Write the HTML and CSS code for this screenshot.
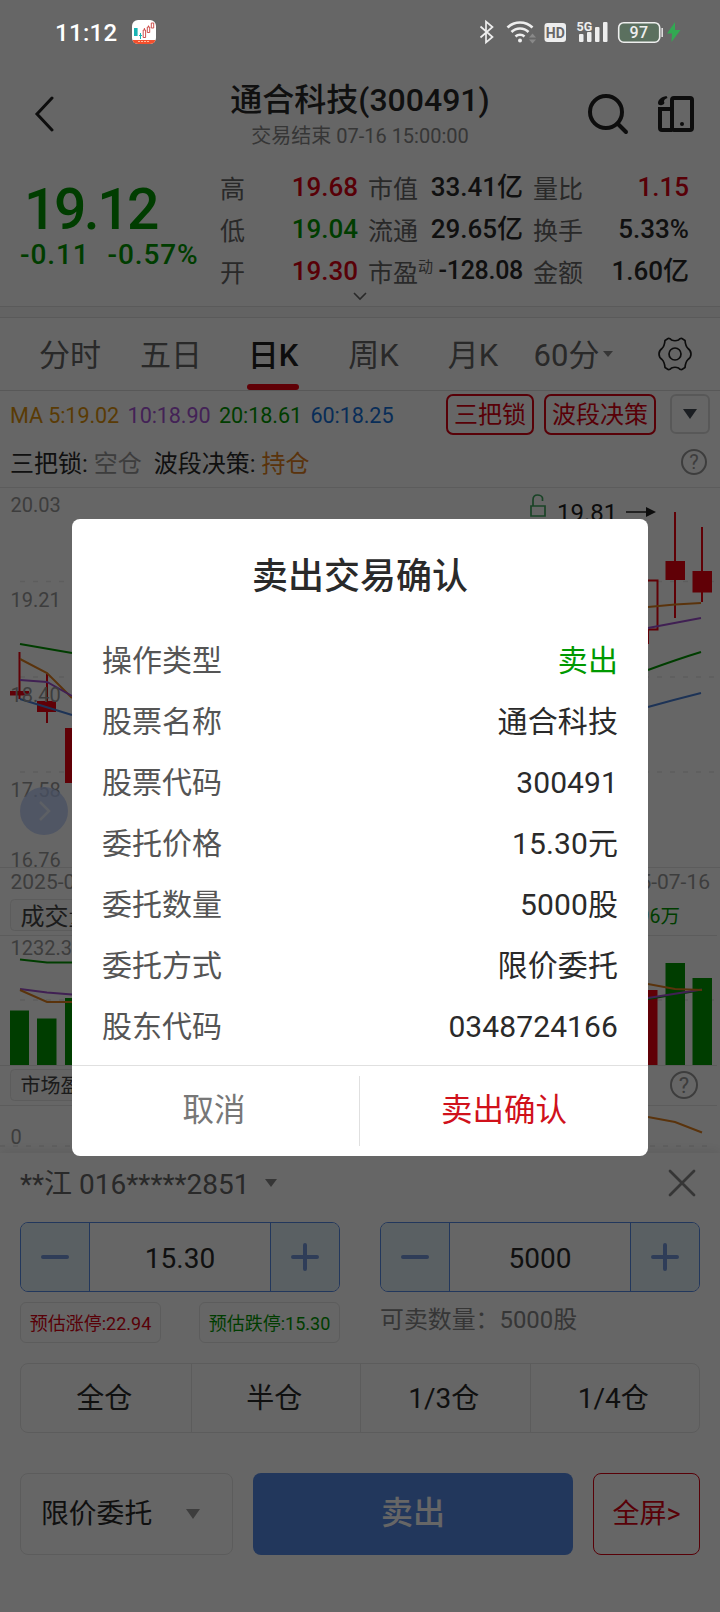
FILE: index.html
```html
<!DOCTYPE html>
<html lang="zh-CN">
<head>
<meta charset="utf-8">
<title>通合科技(300491)</title>
<link rel="stylesheet" href="styles.css">
</head>
<body>
<div class="screen">
  <header class="status">
    <span class="clock">11:12</span>
    <svg class="app-icon" width="24" height="24" viewBox="0 0 24 24">
      <defs><clipPath id="appClip"><rect width="24" height="24" rx="6"/></clipPath></defs>
      <g clip-path="url(#appClip)">
        <rect width="24" height="24" fill="#fff"/>
        <rect x="2" y="8" width="3.6" height="8" fill="#18b4b4"/>
        <path d="M8.5 13v6M7 15.5h3" stroke="#18b4b4" fill="none"/>
        <path d="M11.2 10h2.4v7.500h-2.400zM15.300 7h2.400v5.500h-2.400zM19.300 3h2.400v5h-2.400zM12.400 8v2M16.500 5.500v1.500" stroke="#c8403c" fill="none" stroke-width=".9"/>
        <rect y="20" width="24" height="4" fill="#f2502e"/>
        <path d="M6 21.500h12" stroke="#ffc0a0" stroke-dasharray="2 1"/>
      </g>
    </svg>
    <svg class="status-icons" width="204" height="28" viewBox="478 18 204 28" fill="none">
      <path d="M480.500 26.500L492.500 37l-6.500 5.500v-21L492.500 27 480.500 37.500" stroke="#eee" stroke-width="1.700"/>
      <g stroke="#eee" stroke-width="2.600">
        <path d="M507.500 27.500a18 18 0 0 1 25 0"/><path d="M511.500 32a12 12 0 0 1 17 0"/><path d="M515.500 36.500a6.500 6.500 0 0 1 9 0"/>
      </g>
      <circle cx="520" cy="40.500" r="2" fill="#eee"/>
      <path d="M529 37.500l3.500-4 3.500 4zM529 39.500h7l-3.500 4z" fill="#898989"/>
      <rect x="544.500" y="23" width="21.500" height="19" rx="3" fill="#eee"/>
      <text x="555.300" y="37.800" class="hd-text" text-anchor="middle">HD</text>
      <text x="576.500" y="31" class="g-text">5G</text>
      <g fill="#eee"><rect x="579" y="34" width="4.500" height="8" rx="1"/><rect x="587" y="32" width="4.500" height="10" rx="1"/><rect x="595" y="27" width="4.500" height="15" rx="1"/><rect x="603" y="22" width="4.500" height="20" rx="1"/></g>
      <rect x="618.700" y="22.700" width="41" height="19.500" rx="5" stroke="#eee" stroke-width="1.600" fill="#5b705f"/>
      <path d="M662.200 28v9" stroke="#ddd" stroke-width="1.600"/>
      <text x="639" y="38" class="battery-text" text-anchor="middle">97</text>
      <path d="M675 22l-8 11.500h5l-.5 8.500 9-12h-5.500z" fill="#32a852"/>
    </svg>
  </header>

  <div class="titlebar">
    <svg class="back" width="22" height="36" viewBox="0 0 22 36"><path d="M18 2L3 18l15 16" fill="none" stroke="#222" stroke-width="3" stroke-linecap="round"/></svg>
    <div class="title-box">
      <div class="title">通合科技(300491)</div>
      <div class="subtitle">交易结束 07-16 15:00:00</div>
    </div>
    <div class="title-actions">
      <svg width="44" height="44" viewBox="0 0 44 44" fill="none" stroke="#222" stroke-width="4"><circle cx="20" cy="20" r="16"/><path d="M31.500 31.500L40 40" stroke-linecap="round"/></svg>
      <svg width="38" height="38" viewBox="0 0 38 38" fill="none" stroke="#222" stroke-width="4"><rect x="15" y="3" width="20" height="32" rx="2"/><path d="M15 14H3v19q0 2 2 2h10"/><path d="M9.500 1C4 2 1 5 1 8c0 2 2 2.500 4 2s3-2 2-3.500C7 5 8 4 10.500 3z" fill="#222" stroke="none"/><circle cx="25" cy="29" r="2" fill="#222" stroke="none"/></svg>
    </div>
  </div>

  <section class="quote">
    <div class="price-box down">
      <div class="price">19.12</div>
      <div class="change"><span>-0.11</span><span>-0.57%</span></div>
    </div>
    <div class="stats">
      <span class="k">高</span><span class="v up">19.68</span><span class="k k2">市值</span><span class="v">33.41亿</span><span class="k k3">量比</span><span class="v up">1.15</span>
      <span class="k">低</span><span class="v down">19.04</span><span class="k k2">流通</span><span class="v">29.65亿</span><span class="k k3">换手</span><span class="v">5.33%</span>
      <span class="k">开</span><span class="v up">19.30</span><span class="k k2">市盈<sup>动</sup></span><span class="v tight">-128.08</span><span class="k k3">金额</span><span class="v">1.60亿</span>
    </div>
    <svg class="expand" width="16" height="9" viewBox="0 0 16 9"><path d="M2 1l6 6 6-6" fill="none" stroke="#666" stroke-width="1.600"/></svg>
  </section>
  <div class="band"></div>

  <nav class="tabs">
    <span class="tab">分时</span><span class="tab">五日</span><span class="tab active">日K</span><span class="tab">周K</span><span class="tab">月K</span>
    <span class="tab">60分<i class="caret"></i></span>
    <svg class="gear" width="36" height="36" viewBox="-18 -18 36 36" fill="none" stroke="#222" stroke-width="1.700"><path d="M-7 -15.500Q-5 -15.800 -3.500 -14Q0 -12.500 3.500 -14Q5 -15.800 7 -15.500L10 -13.500Q10.500 -8 13 -5.500Q16 -3.500 16 0Q16 3.500 13 5.500Q10.500 8 10 13.500L7 15.500Q5 15.800 3.500 14Q0 12.500 -3.500 14Q-5 15.800 -7 15.500L-10 13.500Q-10.500 8 -13 5.500Q-16 3.500 -16 0Q-16 -3.500 -13 -5.500Q-10.500 -8 -10 -13.500Z"/><circle r="6"/></svg>
  </nav>

  <div class="ma-row">
    <span class="ma ma5">MA 5:19.02</span><span class="ma ma10">10:18.90</span><span class="ma ma20">20:18.61</span><span class="ma ma60">60:18.25</span>
    <div class="chips"><span class="chip">三把锁</span><span class="chip wide">波段决策</span><span class="drop"><i></i></span></div>
  </div>
  <div class="signal-row">
    <span>三把锁: <em class="flat">空仓</em></span><span>波段决策: <em class="hold">持仓</em></span>
    <svg class="help" width="28" height="28" viewBox="0 0 28 28"><circle cx="14" cy="14" r="12" fill="none" stroke="#999" stroke-width="2"/><text x="14" y="21" text-anchor="middle">?</text></svg>
  </div>

  <svg class="chart" width="720" height="666" viewBox="0 486 720 666" fill="none">
    <g stroke="#e6e6e6" stroke-width="1"><path d="M0 486.500h720M0 866.500h720M0 934.500h717M0 1064.500h717M0 1104.500h717"/></g>
    <g stroke="#e9e9e9" stroke-width="1.500" stroke-dasharray="5 8"><path d="M20 580.500h694M20 676h694M20 771h694M20 999h694M0 1145h714"/></g>
    <g class="candles" stroke="#f0000f" stroke-width="2" fill="#f0000f">
      <path d="M19.500 651v47M47 673v49M675 511v106M702 526v75M648 629v14"/>
      <g stroke="none"><rect x="10" y="690" width="19" height="4.500"/><rect x="37" y="700" width="19" height="11"/><rect x="65" y="727" width="19" height="55"/><rect x="665.500" y="560" width="19.500" height="19"/><rect x="692.500" y="570" width="19.500" height="21.500"/></g>
      <rect x="639" y="579.500" width="18.500" height="49" fill="none"/>
    </g>
    <g stroke-width="2">
      <path stroke="#090" d="M20 643l52 9M648 669q30-11 53-18"/>
      <path stroke="#e08020" d="M20 658l27 14 25 25M648 606l27-2.500 26-1.500"/>
      <path stroke="#a050d0" d="M20 679l27 2 25 14M648 627l53-10"/>
      <path stroke="#4a80d8" d="M20 698l52 16M648 706q25-7 53-14"/>
    </g>
    <g class="axis">
      <text x="10.500" y="511">20.03</text><text x="10.500" y="606">19.21</text><text x="10.500" y="701">18.40</text><text x="10.500" y="796">17.58</text><text x="10.500" y="866">16.76</text>
      <text x="10.500" y="888" class="date">2025-0</text><text x="710" y="888" class="date" text-anchor="end">5-07-16</text>
      <text x="10.500" y="954">1232.30</text><text x="10.500" y="1143">0</text>
    </g>
    <text x="557" y="519.500" class="peak">19.81</text>
    <path d="M626 511h22" stroke="#222" stroke-width="1.500"/><path d="M646 506l10 5-10 5z" fill="#222"/>
    <path d="M531 505h14v10h-14zM533 505v-6q0-5 4.500-5 4 0 5 3v3" stroke="#40a860" stroke-width="1.700"/>
    <circle cx="44" cy="810" r="24" fill="#b6caf8" fill-opacity=".75"/><path d="M40 801l9 9-9 9" stroke="#fff" stroke-opacity=".6" stroke-width="2.500"/>
    <rect x="10.500" y="898.500" width="90" height="31" rx="4" fill="#f9f9f9" stroke="#e6e6e6"/><text x="20.500" y="923.500" class="pill24">成交量</text>
    <text x="680" y="921.500" class="volume-text" text-anchor="end">96万</text>
    <g fill="#090"><rect x="10" y="1009.500" width="19" height="54.500"/><rect x="37" y="1017.500" width="19.500" height="46.500"/><rect x="65" y="997" width="19" height="67"/><rect x="665.500" y="962" width="19.500" height="102"/><rect x="692.500" y="977" width="19.500" height="87"/></g>
    <rect x="638" y="989" width="19.500" height="75" fill="#f0000f"/>
    <g stroke-width="2"><path stroke="#090" d="M20 958.500l27 3h25M648 998l54-9"/><path stroke="#a050d0" d="M20 988l27 3.500 25 2M648 997l54-8.500"/><path stroke="#e08020" d="M20 989l27 12h25M648 983l27 5 27 1M648 1116l27 5 27 10.500"/></g>
    <rect x="10.500" y="1068.500" width="90" height="31" rx="4" fill="#f9f9f9" stroke="#e6e6e6"/><text x="20.500" y="1092" class="pill20">市场盈亏</text>
    <circle cx="684" cy="1084" r="13" stroke="#999" stroke-width="2"/><text x="684" y="1092" class="help-text" text-anchor="middle">?</text>
  </svg>

  <section class="trade">
    <div class="account"><span>**江 016*****2851</span><i class="caret big"></i>
      <svg width="28" height="28" viewBox="0 0 28 28"><path d="M2 2l24 24M26 2L2 26" stroke="#888" stroke-width="2.800" stroke-linecap="round"/></svg>
    </div>
    <div class="two">
      <div>
        <div class="stepper"><b><svg width="28" height="28"><path d="M2 14h24"/></svg></b><span>15.30</span><b><svg width="28" height="28"><path d="M2 14h24M14 2v24"/></svg></b></div>
        <div class="limits"><span class="up">预估涨停:22.94</span><span class="down">预估跌停:15.30</span></div>
      </div>
      <div>
        <div class="stepper"><b><svg width="28" height="28"><path d="M2 14h24"/></svg></b><span>5000</span><b><svg width="28" height="28"><path d="M2 14h24M14 2v24"/></svg></b></div>
        <div class="avail">可卖数量：5000股</div>
      </div>
    </div>
    <div class="ratios"><span>全仓</span><span>半仓</span><span>1/3仓</span><span>1/4仓</span></div>
    <div class="actions">
      <div class="select"><span>限价委托</span><i></i></div>
      <div class="sell">卖出</div>
      <div class="full">全屏&gt;</div>
    </div>
  </section>

  <div class="mask">
    <div class="dialog">
      <h2>卖出交易确认</h2>
      <dl>
        <div><dt>操作类型</dt><dd class="down">卖出</dd></div>
        <div><dt>股票名称</dt><dd>通合科技</dd></div>
        <div><dt>股票代码</dt><dd>300491</dd></div>
        <div><dt>委托价格</dt><dd>15.30元</dd></div>
        <div><dt>委托数量</dt><dd>5000股</dd></div>
        <div><dt>委托方式</dt><dd>限价委托</dd></div>
        <div><dt>股东代码</dt><dd>0348724166</dd></div>
      </dl>
      <footer><span class="cancel">取消</span><i></i><span class="confirm">卖出确认</span></footer>
    </div>
  </div>
</div>
</body>
</html>
```
FILE: styles.css
```css
* { box-sizing: border-box; }
body { margin: 0; background: #fff; font-family: Roboto, "Noto Sans CJK SC", sans-serif; color: #2a2a2a; }
i, em, b { font-style: normal; font-weight: 400; }
svg { display: block; flex: none; }
.screen { position: relative; width: 720px; height: 1612px; overflow: hidden; background: #fff; }
.up { color: #dc0012; }
.down { color: #090; }

.status { position: relative; z-index: 3; height: 64px; display: flex; align-items: center; padding: 0 38px 0 55px; color: #fff; }
.clock { font-size: 24px; font-weight: 500; letter-spacing: .3px; width: 77px; padding-top: 1px; }
.status-icons { margin-left: auto; }
.hd-text { font: 700 14px Roboto, sans-serif; fill: #666; }
.g-text { font: 700 12.500px Roboto, sans-serif; fill: #eee; }
.battery-text { font: 500 16px Roboto, sans-serif; fill: #eee; letter-spacing: .5px; }

.titlebar { height: 96px; display: grid; grid-template-columns: 180px 1fr 180px; padding-top: 16px; }
.back { margin: 16px 0 0 34px; }
.title-box { text-align: center; white-space: nowrap; }
.title { font-size: 32px; line-height: 40px; font-weight: 500; }
.subtitle { font-size: 20px; line-height: 28px; color: #888; margin-top: 2px; }
.title-actions { display: flex; gap: 27px; padding: 12px 0 0 46px; }
.title-actions svg + svg { margin-top: 3px; }

.quote { position: relative; height: 146px; display: flex; }
.price-box { width: 221px; padding: 16px 0 0 20px; font-weight: 500; white-space: nowrap; }
.price { font-size: 57px; line-height: 67px; letter-spacing: -2.500px; padding-left: 4px; }
.change { display: flex; gap: 18px; font-size: 28px; line-height: 28px; margin-top: -2px; }
.change span { letter-spacing: .9px; }
.stats { display: grid; grid-template-columns: 50px 87px 66px 99px 62px 104px; grid-auto-rows: 42px; align-items: center; padding-top: 6px; height: 132px; white-space: nowrap; line-height: 38px; }
.k { font-size: 25px; color: #666; padding-top: 5px; margin-left: -1px; }
.k2, .k3 { padding-left: 11px; }
.k sup { font-size: 15px; vertical-align: 10px; line-height: 0; }
.v { font-size: 26px; text-align: right; font-weight: 500; height: 39px; }
.tight { font-size: 25px; letter-spacing: -.3px; }
.expand { position: absolute; left: 352px; top: 132px; }
.band { height: 12px; background: #f7f7f7; border-top: 1px solid #e0e0e0; border-bottom: 1px solid #e0e0e0; }

.tabs { height: 73px; display: grid; grid-template-columns: 102px 100px 104px 97px 102px 99px 1fr; padding: 0 0 0 19px; border-bottom: 1px solid #ddd; font-size: 31px; line-height: 76px; color: #666; text-align: center; }
.tab { white-space: nowrap; height: 73px; }
.tab.active { position: relative; color: #222; font-weight: 500; }
.active::after { content: ""; position: absolute; left: 26px; bottom: 1px; width: 52px; height: 6px; border-radius: 3px; background: #f0000f; }
.caret { display: inline-block; vertical-align: 9px; margin-left: 4px; border: 5px solid transparent; border-top: 6px solid #888; border-bottom: 0; }
.gear { margin: 18px 0 0 34px; }

.ma-row { height: 50px; display: flex; align-items: flex-start; padding: 3px 10px 0 10px; font-size: 21.600px; }
.ma { line-height: 44px; margin-right: 8.500px; white-space: nowrap; letter-spacing: -.1px; }
.ma5 { color: #e0940c; } .ma10 { color: #a855d8; } .ma20 { color: #090; } .ma60 { color: #1672dc; }
.chips { display: flex; margin-left: auto; }
.chip { width: 88px; height: 41px; border: 2px solid #dc0012; border-radius: 7px; color: #dc0012; font-size: 24px; line-height: 39px; margin-right: 10px; white-space: nowrap; text-align: center; }
.wide { width: 112px; }
.drop { width: 40px; height: 40px; margin-left: 4px; border: 2px solid #ddd; border-radius: 6px; display: grid; place-items: center; }
.drop i { border: 7px solid transparent; border-top: 10px solid #444b55; border-bottom: 0; }
.signal-row { height: 46px; display: flex; align-items: center; gap: 12px; padding: 0 12px 5px 10px; font-size: 24px; white-space: nowrap; }
.flat { color: #999; } .hold { color: #e08020; }
.help { margin-left: auto; }
.help text, .help-text { font: 20px Roboto, sans-serif; fill: #999; }
.help-text { font-size: 22px; }

.axis text { font: 20px Roboto, sans-serif; fill: #999; }
.axis .date { font-size: 21px; }
.peak { font: 24px Roboto, sans-serif; fill: #222; }
.pill24, .pill20 { font: 24px Roboto, "Noto Sans CJK SC", sans-serif; fill: #444; }
.pill20 { font-size: 20px; }
.volume-text { font: 19.500px Roboto, "Noto Sans CJK SC", sans-serif; fill: #090; }

.trade { position: relative; height: 460px; padding: 0 20px; background: #fff; box-shadow: 0 -3px 10px rgba(0, 0, 0, .08); }
.account { height: 69px; display: flex; align-items: center; padding: 0 4px 9px 0; font-size: 28px; color: #666; }
.account span { margin-top: -3px; }
.account svg { margin-left: auto; }
.caret.big { margin: 0 0 0 15px; border-width: 8px 6px 0; }
.two { display: grid; grid-template-columns: 320px 320px; gap: 40px; height: 141px; }
.stepper { height: 70px; display: flex; border: 1px solid #5589e6; border-radius: 8px; overflow: hidden; font-size: 28px; }
.stepper b { width: 68px; background: #e1eff8; display: grid; place-items: center; }
.stepper span { flex: 1; display: grid; place-items: center; padding-top: 2px; border: solid #5589e6; border-width: 0 1px; }
.stepper path { stroke: #7599db; stroke-width: 4; stroke-linecap: round; }
.limits { display: flex; justify-content: space-between; margin-top: 10px; }
.limits span { width: 141px; height: 41px; border: 1px solid #e6e6e6; border-radius: 6px; font-size: 18px; line-height: 41px; text-align: center; white-space: nowrap; }
.avail { margin-top: 10px; font-size: 23.900px; line-height: 37px; color: #888; }
.ratios { height: 70px; display: grid; grid-template-columns: repeat(4, 1fr); border: 1px solid #e6e6e6; border-radius: 8px; font-size: 28px; line-height: 69px; text-align: center; }
.ratios span { padding-right: 3px; }
.ratios span + span { border-left: 1px solid #e6e6e6; }
.actions { display: grid; grid-template-columns: 213px 320px 107px; gap: 20px; height: 80px; margin-top: 40px; line-height: 80px; text-align: center; }
.select { border: 1px solid #e6e6e6; border-radius: 8px; display: flex; align-items: center; padding: 0 32px 0 20px; font-size: 27.800px; justify-content: space-between; }
.select i { border: 7px solid transparent; border-top: 10px solid #999; border-bottom: 0; }
.sell { background: #5589e6; color: #fff; border-radius: 8px; font-size: 32px; font-weight: 500; }
.full { border: 1px solid #dc0012; color: #dc0012; border-radius: 8px; font-size: 27px; }

.mask { position: absolute; inset: 0; z-index: 2; background: rgba(0, 0, 0, .6); padding: 519px 72px 0; }
.dialog { height: 637px; background: #fff; border-radius: 8px; display: flex; flex-direction: column; }
.dialog h2 { margin: 0; height: 111px; flex: none; line-height: 116px; font-size: 36px; font-weight: 500; text-align: center; }
.dialog dl { margin: 0; padding: 0 30px; height: 435px; flex: none; }
.dialog dl div { height: 61px; display: flex; justify-content: space-between; align-items: center; font-size: 30px; line-height: 61px; }
.dialog dt { color: #555; }
.dialog dd { margin: 0; letter-spacing: .1px; }
.dialog footer { height: 91px; display: grid; grid-template-columns: 287px 1px 288px; border-top: 1px solid #e0e0e0; font-size: 31.500px; line-height: 90px; text-align: center; }
.dialog footer i { background: #e0e0e0; height: 70px; margin-top: 10px; }
.cancel { color: #777; padding-right: 3px; }
.confirm { color: #d0111b; }
```
